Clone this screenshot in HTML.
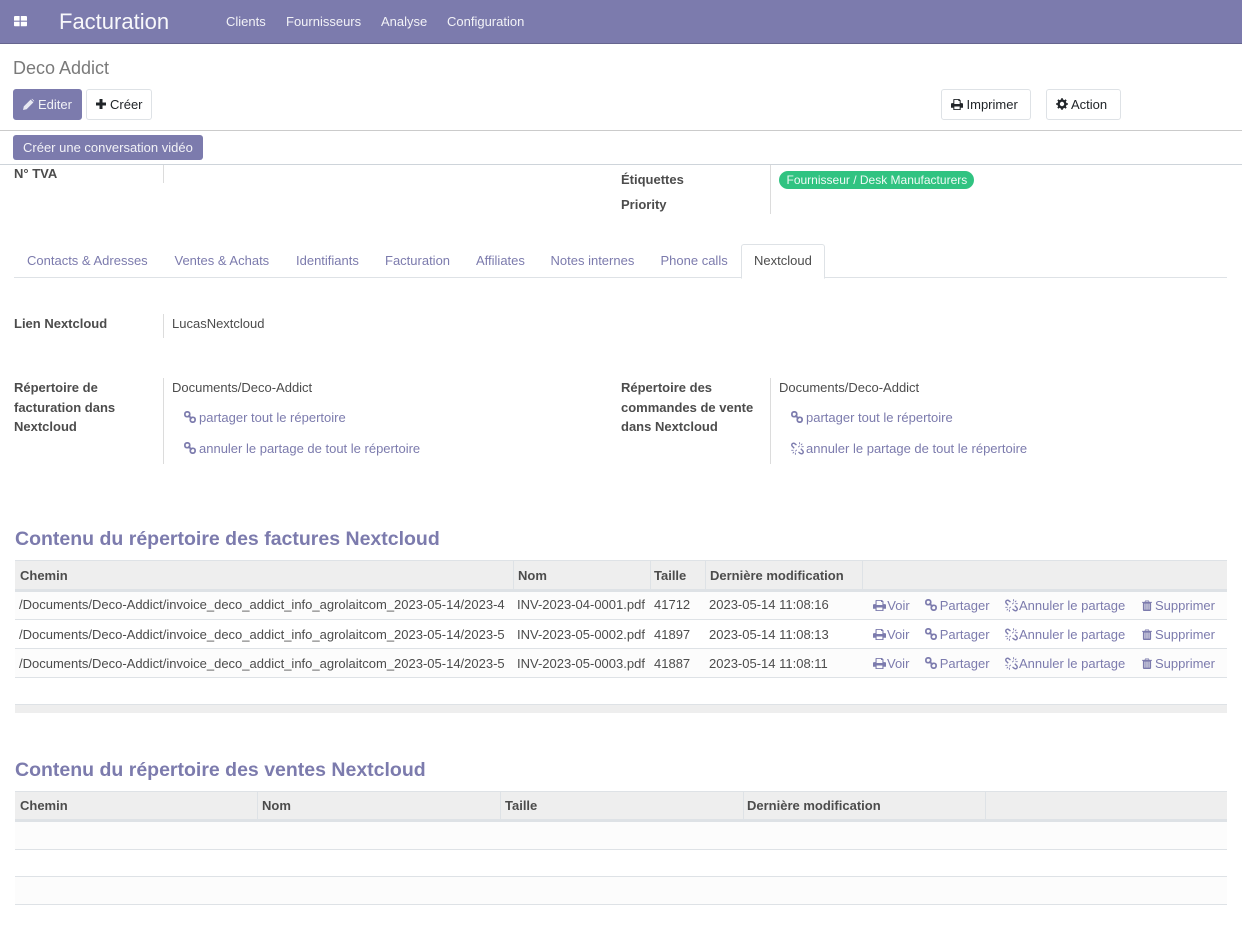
<!DOCTYPE html>
<html lang="fr"><head><meta charset="utf-8"><title>Facturation</title>
<style>
html,body{margin:0;padding:0;background:#fff}
body{width:1242px;height:925px;position:relative;overflow:hidden;font:13px/16px "Liberation Sans",sans-serif;color:#4c4c4c}
.t{position:absolute;white-space:nowrap;line-height:16px}
.b{font-weight:700}
.l{color:#7c7bad}
.r{position:absolute}
.n{color:rgba(255,255,255,.9)}
svg{position:absolute;overflow:visible}
.btn{position:absolute;box-sizing:border-box;border:1px solid #dee2e6;border-radius:3px;background:#fff;color:#212529;height:31px;top:89px}
</style></head><body>
<svg width="0" height="0" style="position:absolute"><defs>
<symbol id="link" viewBox="0 0 12 12"><g fill="none" stroke="currentColor" stroke-width="1.7"><rect x="0.9" y="0.9" width="4.8" height="4.8" rx="2"/><rect x="6.300" y="6.300" width="4.800" height="4.800" rx="2"/><path d="M4.300 4.300L7.700 7.700" stroke-width="1.800"/></g></symbol>
<symbol id="unlink" viewBox="0 0 13 13"><g fill="none" stroke="currentColor" stroke-width="1.400"><path d="M5.500 3L3.800 1.700A1.800 1.800 0 0 0 1.300 4.300L3.200 6.200"/><path d="M7.500 10L9.200 11.300A1.800 1.800 0 0 0 11.700 8.700L9.800 6.800"/><path d="M5.800 7.800L4.300 9.300M7.200 5.200L8.700 3.700M.3 8.300H2.500M10.500 4.700H12.700M4.400 10.800V12.800M8.600 .2V2.200M1.700 11.300L3 10M11.300 1.700L10 3" stroke-width=".9"/></g></symbol>
<symbol id="print" viewBox="0 0 13 12" preserveAspectRatio="none"><path fill="currentColor" fill-rule="evenodd" d="M3 0H9L10.500 1.500V4.500H12A1 1 0 0 1 13 5.500V9.500H10.500V12H2.500V9.500H0V5.500A1 1 0 0 1 1 4.500H2.500V1A1 1 0 0 1 3 0ZM3.600 1V5.500H9.400V2.200H8V1ZM3.600 8.200V11H9.400V8.200Z"/></symbol>
<symbol id="trash" viewBox="0 0 11 12"><path fill="currentColor" fill-rule="evenodd" d="M3.500 .5H7.500L8.200 2H11V3H10V11A1 1 0 0 1 9 12H2A1 1 0 0 1 1 11V3H0V2H2.800ZM4 1.400L3.800 2H7.200L7 1.400ZM2.800 4V10.500H3.700V4ZM5 4V10.500H6V4ZM7.300 4V10.500H8.200V4Z"/></symbol>
</defs></svg>

<!-- navbar -->
<div class="r" style="left:0;top:0;width:1242px;height:43px;background:#7c7bad;border-bottom:1px solid #66658f"></div>
<svg style="left:13.500px;top:16px" width="13" height="10.500" viewBox="0 0 13 11" preserveAspectRatio="none"><path fill="#fff" d="M0 1a1 1 0 0 1 1-1h4.600v4.800H0zM6.800 0H12a1 1 0 0 1 1 1v3.800H6.800zM0 6h5.600v4.800H1a1 1 0 0 1-1-1zM6.800 6H13v3.800a1 1 0 0 1-1 1H6.800z"/></svg>
<div class="t" style="left:59px;top:9px;font-size:22px;line-height:26px;color:rgba(255,255,255,.95)">Facturation</div>
<div class="t n" style="left:226px;top:14px">Clients</div>
<div class="t n" style="left:286px;top:14px">Fournisseurs</div>
<div class="t n" style="left:381px;top:14px">Analyse</div>
<div class="t n" style="left:447px;top:14px">Configuration</div>

<!-- control panel -->
<div class="t" style="left:13px;top:57px;font-size:18px;line-height:22px;color:#7a7a7a">Deco Addict</div>
<div class="btn" style="left:13px;width:69px;background:#7c7bad;border-color:#7c7bad;color:#fff"></div>
<svg style="left:23px;top:99px" width="11" height="11"><path fill="#e8e8f2" d="M7.600 .6l2.800 2.800L3.600 10.200 0 11l.8-3.600zM8.400 0c.3-.2.8-.2 1 0l1.600 1.600c.2.200.2.700 0 1z"/></svg>
<div class="t" style="left:38px;top:97px;color:rgba(255,255,255,.9)">Editer</div>
<div class="btn" style="left:86px;width:66px"></div>
<svg style="left:96px;top:99px" width="10" height="10"><path fill="#212529" d="M3.500 0h3v3.500H10v3H6.500V10h-3V6.500H0v-3h3.500z"/></svg>
<div class="t" style="left:110px;top:97px;color:#212529">Créer</div>
<div class="btn" style="left:941px;width:90px"></div>
<svg style="left:951px;top:99px;color:#212529" width="12" height="11"><use href="#print"/></svg>
<div class="t" style="left:966.500px;top:97px;color:#212529">Imprimer</div>
<div class="btn" style="left:1046px;width:75px"></div>
<svg style="left:1056px;top:98px" width="12" height="12" viewBox="0 0 12 12"><circle cx="6" cy="6" r="3.400" fill="none" stroke="#212529" stroke-width="2.400"/><path stroke="#212529" stroke-width="1.800" d="M6 .2V2M6 10V11.800M.2 6H2M10 6H11.800M1.900 1.900L3.200 3.200M8.800 8.800L10.100 10.100M1.900 10.100L3.200 8.800M8.800 3.200L10.100 1.900"/></svg>
<div class="t" style="left:1071px;top:97px;color:#212529">Action</div>
<div class="r" style="left:0;top:130px;width:1242px;height:1px;background:#cbcbcb"></div>

<!-- statusbar -->
<div class="r" style="left:13px;top:135px;width:190px;height:25px;background:#7c7bad;border-radius:3px"></div>
<div class="t" style="left:23px;top:140px;color:rgba(255,255,255,.9)">Créer une conversation vidéo</div>
<div class="r" style="left:0;top:164px;width:1242px;height:1px;background:#ced4da"></div>

<!-- top fields -->
<div class="t b" style="left:14px;top:166px">N° TVA</div>
<div class="r" style="left:163px;top:165px;width:1px;height:18px;background:#dcdcdc"></div>
<div class="t b" style="left:621px;top:172px">Étiquettes</div>
<div class="t b" style="left:621px;top:197px">Priority</div>
<div class="r" style="left:770px;top:165px;width:1px;height:49px;background:#dcdcdc"></div>
<div class="r" style="left:779px;top:171px;width:195px;height:18px;border-radius:9px;background:#30c381"></div>
<div class="t" style="left:786.500px;top:172px;font-size:12px;color:rgba(255,255,255,.92)">Fournisseur / Desk Manufacturers</div>

<!-- tabs -->
<div class="r" style="left:14px;top:277px;width:1213px;height:1px;background:#dee2e6"></div>
<div class="t l" style="left:27px;top:253px">Contacts &amp; Adresses</div>
<div class="t l" style="left:174.500px;top:253px">Ventes &amp; Achats</div>
<div class="t l" style="left:296px;top:253px">Identifiants</div>
<div class="t l" style="left:385px;top:253px">Facturation</div>
<div class="t l" style="left:476px;top:253px">Affiliates</div>
<div class="t l" style="left:550.500px;top:253px">Notes internes</div>
<div class="t l" style="left:660.500px;top:253px">Phone calls</div>
<div class="r" style="left:741px;top:244px;width:82px;height:33px;border:1px solid #dee2e6;border-bottom:1px solid #fff;border-radius:3px 3px 0 0;background:#fff"></div>
<div class="t" style="left:754px;top:253px">Nextcloud</div>

<!-- nextcloud fields -->
<div class="t b" style="left:14px;top:316px">Lien Nextcloud</div>
<div class="r" style="left:163px;top:314px;width:1px;height:24px;background:#dcdcdc"></div>
<div class="t" style="left:172px;top:316px">LucasNextcloud</div>

<div class="t b" style="left:14px;top:380px">Répertoire de</div>
<div class="t b" style="left:14px;top:400px">facturation dans</div>
<div class="t b" style="left:14px;top:419px">Nextcloud</div>
<div class="r" style="left:163px;top:378px;width:1px;height:86px;background:#dcdcdc"></div>
<div class="t" style="left:172px;top:380px">Documents/Deco-Addict</div>
<svg class="l" style="left:184px;top:411px" width="12" height="12"><use href="#link"/></svg>
<div class="t l" style="left:199px;top:410px">partager tout le répertoire</div>
<svg class="l" style="left:184px;top:442px" width="12" height="12"><use href="#link"/></svg>
<div class="t l" style="left:199px;top:441px">annuler le partage de tout le répertoire</div>

<div class="t b" style="left:621px;top:380px">Répertoire des</div>
<div class="t b" style="left:621px;top:400px">commandes de vente</div>
<div class="t b" style="left:621px;top:419px">dans Nextcloud</div>
<div class="r" style="left:770px;top:378px;width:1px;height:86px;background:#dcdcdc"></div>
<div class="t" style="left:779px;top:380px">Documents/Deco-Addict</div>
<svg class="l" style="left:791px;top:411px" width="12" height="12"><use href="#link"/></svg>
<div class="t l" style="left:806px;top:410px">partager tout le répertoire</div>
<svg class="l" style="left:791px;top:442px" width="13" height="13"><use href="#unlink"/></svg>
<div class="t l" style="left:806px;top:441px">annuler le partage de tout le répertoire</div>

<!-- table 1 -->
<div class="t b l" style="left:15px;top:526px;font-size:19.500px;line-height:26px">Contenu du répertoire des factures Nextcloud</div>
<div class="r" style="left:15px;top:560px;width:1212px;height:29px;background:#eee;border-top:1px solid #dee2e6;box-sizing:border-box"></div>
<div class="r" style="left:15px;top:589px;width:1212px;height:3px;background:#dee2e6"></div>
<div class="r" style="left:513px;top:561px;width:1px;height:28px;background:#dee2e6"></div>
<div class="r" style="left:650px;top:561px;width:1px;height:28px;background:#dee2e6"></div>
<div class="r" style="left:705px;top:561px;width:1px;height:28px;background:#dee2e6"></div>
<div class="r" style="left:862px;top:561px;width:1px;height:28px;background:#dee2e6"></div>
<div class="t b" style="left:20px;top:568px">Chemin</div>
<div class="t b" style="left:518px;top:568px">Nom</div>
<div class="t b" style="left:654px;top:568px">Taille</div>
<div class="t b" style="left:710px;top:568px">Dernière modification</div>

<div class="r" style="left:15px;top:592px;width:1212px;height:27px;background:#fcfcfc"></div>
<div class="r" style="left:15px;top:619px;width:1212px;height:1px;background:#dee2e6"></div>
<div class="r" style="left:15px;top:648px;width:1212px;height:1px;background:#dee2e6"></div>
<div class="r" style="left:15px;top:649px;width:1212px;height:28px;background:#fcfcfc"></div>
<div class="r" style="left:15px;top:677px;width:1212px;height:1px;background:#dee2e6"></div>

<div class="t" style="left:19px;top:597px">/Documents/Deco-Addict/invoice_deco_addict_info_agrolaitcom_2023-05-14/2023-4</div>
<div class="t" style="left:517px;top:597px">INV-2023-04-0001.pdf</div>
<div class="t" style="left:654px;top:597px">41712</div>
<div class="t" style="left:709px;top:597px">2023-05-14 11:08:16</div>
<svg class="l" style="left:873px;top:600px" width="13" height="11"><use href="#print"/></svg><div class="t l" style="left:887.300px;top:598px">Voir</div>
<svg class="l" style="left:925px;top:599px" width="12" height="12"><use href="#link"/></svg><div class="t l" style="left:939.700px;top:598px">Partager</div>
<svg class="l" style="left:1005px;top:599px" width="13" height="13"><use href="#unlink"/></svg><div class="t l" style="left:1019px;top:598px">Annuler le partage</div>
<svg class="l" style="left:1142px;top:600px" width="10" height="11"><use href="#trash"/></svg><div class="t l" style="left:1155px;top:598px">Supprimer</div>

<div class="t" style="left:19px;top:627px">/Documents/Deco-Addict/invoice_deco_addict_info_agrolaitcom_2023-05-14/2023-5</div>
<div class="t" style="left:517px;top:627px">INV-2023-05-0002.pdf</div>
<div class="t" style="left:654px;top:627px">41897</div>
<div class="t" style="left:709px;top:627px">2023-05-14 11:08:13</div>
<svg class="l" style="left:873px;top:629px" width="13" height="11"><use href="#print"/></svg><div class="t l" style="left:887px;top:627px">Voir</div>
<svg class="l" style="left:925px;top:628px" width="12" height="12"><use href="#link"/></svg><div class="t l" style="left:939.700px;top:627px">Partager</div>
<svg class="l" style="left:1005px;top:628px" width="13" height="13"><use href="#unlink"/></svg><div class="t l" style="left:1019px;top:627px">Annuler le partage</div>
<svg class="l" style="left:1142px;top:629px" width="10" height="11"><use href="#trash"/></svg><div class="t l" style="left:1155px;top:627px">Supprimer</div>

<div class="t" style="left:19px;top:656px">/Documents/Deco-Addict/invoice_deco_addict_info_agrolaitcom_2023-05-14/2023-5</div>
<div class="t" style="left:517px;top:656px">INV-2023-05-0003.pdf</div>
<div class="t" style="left:654px;top:656px">41887</div>
<div class="t" style="left:709px;top:656px">2023-05-14 11:08:11</div>
<svg class="l" style="left:873px;top:658px" width="13" height="11"><use href="#print"/></svg><div class="t l" style="left:887px;top:656px">Voir</div>
<svg class="l" style="left:925px;top:657px" width="12" height="12"><use href="#link"/></svg><div class="t l" style="left:939.700px;top:656px">Partager</div>
<svg class="l" style="left:1005px;top:657px" width="13" height="13"><use href="#unlink"/></svg><div class="t l" style="left:1019px;top:656px">Annuler le partage</div>
<svg class="l" style="left:1142px;top:658px" width="10" height="11"><use href="#trash"/></svg><div class="t l" style="left:1155px;top:656px">Supprimer</div>

<div class="r" style="left:15px;top:704px;width:1212px;height:9px;background:#eee;border-top:1px solid #dee2e6;box-sizing:border-box"></div>

<!-- table 2 -->
<div class="t b l" style="left:15px;top:757px;font-size:19.500px;line-height:26px">Contenu du répertoire des ventes Nextcloud</div>
<div class="r" style="left:15px;top:791px;width:1212px;height:29px;background:#eee;border-top:1px solid #dee2e6;box-sizing:border-box"></div>
<div class="r" style="left:15px;top:819px;width:1212px;height:3px;background:#dee2e6"></div>
<div class="r" style="left:257px;top:792px;width:1px;height:27px;background:#dee2e6"></div>
<div class="r" style="left:500px;top:792px;width:1px;height:27px;background:#dee2e6"></div>
<div class="r" style="left:743px;top:792px;width:1px;height:27px;background:#dee2e6"></div>
<div class="r" style="left:985px;top:792px;width:1px;height:27px;background:#dee2e6"></div>
<div class="t b" style="left:20px;top:798px">Chemin</div>
<div class="t b" style="left:262px;top:798px">Nom</div>
<div class="t b" style="left:505px;top:798px">Taille</div>
<div class="t b" style="left:747px;top:798px">Dernière modification</div>
<div class="r" style="left:15px;top:822px;width:1212px;height:27px;background:#fcfcfc"></div>
<div class="r" style="left:15px;top:849px;width:1212px;height:1px;background:#dee2e6"></div>
<div class="r" style="left:15px;top:876px;width:1212px;height:1px;background:#dee2e6"></div>
<div class="r" style="left:15px;top:877px;width:1212px;height:27px;background:#fcfcfc"></div>
<div class="r" style="left:15px;top:904px;width:1212px;height:1px;background:#dee2e6"></div>
</body></html>
